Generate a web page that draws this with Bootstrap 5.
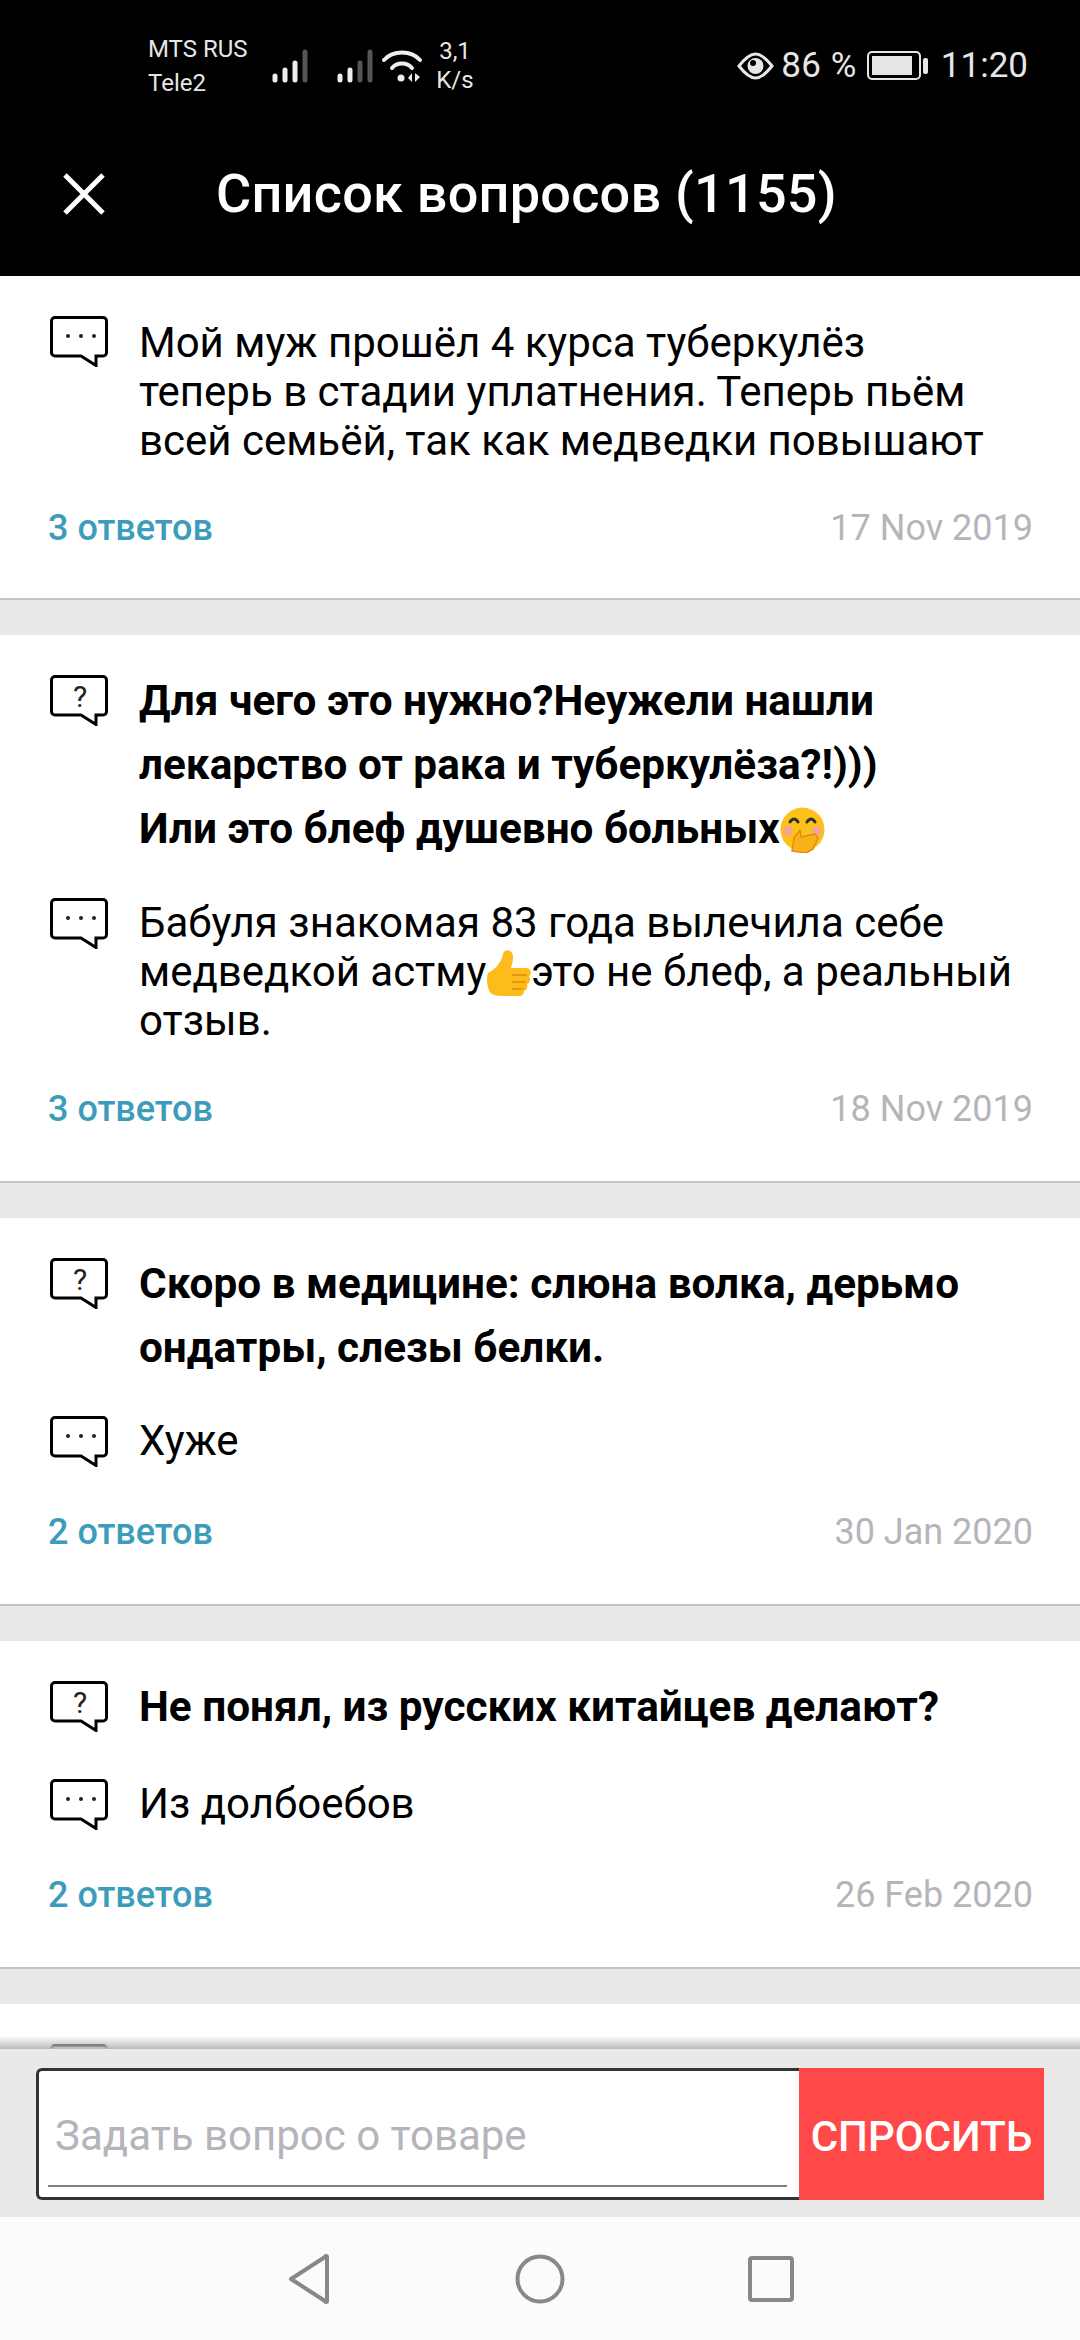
<!DOCTYPE html>
<html lang="en">
<head>
<meta charset="UTF-8">
<title>Список вопросов</title>
<link rel="stylesheet" href="https://cdn.jsdelivr.net/npm/bootstrap@5.3.0/dist/css/bootstrap.min.css">
<style>
html, body { margin: 0; height: 2340px; overflow: hidden; }
body { font-family: Roboto, "Liberation Sans", sans-serif; background: #e9e9e9; color: #000; width: 1080px; }
.phone { height: 2340px; }
.top-area { height: 276px; background: #000; color: #fff; flex: none; }
.status-row { height: 132px; padding-left: 148px; padding-right: 52px; color: #e6e6e6; }
.carrier { width: 124px; font-size: 24px; line-height: 34px; white-space: nowrap; }
.sig-one { margin-right: 29px; }
.sig-two { margin-right: 9px; }
.wifi-ico { margin-right: 14px; }
.speed { font-size: 24px; line-height: 29px; width: 38px; text-align: center; white-space: nowrap; }
.batt-text { font-size: 35px; line-height: 40px; }
.pct-text { margin: 0 10px 0 7px; letter-spacing: .5px; }
.time-text { margin-left: 13px; }
.title-row { height: 144px; padding-bottom: 20px; }
.close-icon { margin-left: 63px; margin-right: 111px; }
.title-text { font-size: 54px; font-weight: 500; line-height: 60px; white-space: nowrap; letter-spacing: .25px; }
.feed { flex: 1 1 auto; overflow: hidden; min-height: 0; }
.q-card { background: #fff; border-bottom: 2px solid #c4c4c4; margin-bottom: 35px; padding: 34px 47px 52px 48px; }
.q-card.q-first { padding-top: 42px; padding-bottom: 50px; }
.q-first .q-ico { margin-top: -2px; }
.q-line { gap: 31px; }
.q-line.q-answer { min-height: 53px; margin-bottom: 43px; }
.q-line.q-ask { margin-bottom: 36px; }
.q-tall .q-line.q-answer { margin-bottom: 44px; }
.q-tall .q-line.q-ask { margin-bottom: 37px; }
.q-ico { flex: none; width: 58px; height: 51px; margin-left: 2px; }
.q-ask .q-ico { margin-top: 6px; }
.q-body { font-size: 42px; line-height: 49px; white-space: nowrap; }
.q-head { font-size: 42.3px; font-weight: 700; line-height: 64px; min-height: 68px; white-space: nowrap; }
.answers { font-size: 36px; font-weight: 500; color: #3c9dbb; }
.q-date { font-size: 36px; color: #b5b5b9; }
.q-foot { line-height: 40px; }
.emoji-ico { width: 45px; height: 47px; vertical-align: -10px; }
.ask-bar { height: 168px; background: #e9e9e9; padding: 19px 36px 17px; position: relative; flex: none; }
.ask-bar::before { content: ""; position: absolute; left: 0; right: 0; top: -13px; height: 13px; background: linear-gradient(#ffffff00, #b9b9b9); }
.ask-box { height: 132px; }
.ask-field { background: #fff; border: 3px solid #333; border-right: 0; border-radius: 6px 0 0 6px; padding: 0 12px 10px 9px; }
.ask-input { border: 0; border-bottom: 2px solid #808080; border-radius: 0; outline: none; height: 100%; width: 100%; font-size: 42px; padding: 14px 7px 0; background: transparent; }
.ask-input::placeholder { color: #b4b4ba; opacity: 1; }
.ask-btn { width: 245px; background: #ff4848; color: #fff; font-size: 42px; font-weight: 500; border: 0; border-radius: 0; padding: 4px 0 0; flex: none; white-space: nowrap; }
.nav-bar { height: 123px; background: #fbfbfb; flex: none; }
.nav-slot { width: 231px; }
</style>
</head>
<body>
<div class="phone d-flex flex-column">

  <div class="top-area">
    <div class="status-row d-flex align-items-center">
      <div class="carrier">MTS RUS<br>Tele2</div>
      <svg class="sig-one" width="36" height="34" viewBox="0 0 36 34"><g fill="none" stroke-width="5" stroke-linecap="round"><path d="M3 27v4M13 21v10M23 14v17" stroke="#eee"/><path d="M33 3v28" stroke="#555"/></g></svg>
      <svg class="sig-two" width="36" height="34" viewBox="0 0 36 34"><g fill="none" stroke-width="5" stroke-linecap="round"><path d="M3 27v4M13 21v10" stroke="#eee"/><path d="M23 14v17M33 3v28" stroke="#555"/></g></svg>
      <svg class="wifi-ico" width="40" height="34" viewBox="0 0 40 34"><g fill="none" stroke="#eee" stroke-width="4" stroke-linecap="round"><path d="M2 11C11 1 29 1 38 11"/><path d="M10 19c5-6 15-6 20 0"/></g><circle cx="19" cy="29" r="3.500" fill="#eee"/><path d="M30 24v9l-4-4zM33 24v9l5-5z" fill="#eee"/></svg>
      <div class="speed">3,1<br>K/s</div>
      <div class="ms-auto d-flex align-items-center batt-text">
        <svg width="37" height="28" viewBox="0 0 37 28"><path d="M2 14C9 5 14 2 18.500 2S28 5 35 14c-7 9-12 12-16.500 12S9 23 2 14z" fill="none" stroke="#e6e6e6" stroke-width="3"/><circle cx="18.500" cy="14" r="8" fill="#e6e6e6"/><circle cx="16" cy="11" r="3" fill="#000"/></svg>
        <span class="pct-text">86 %</span>
        <svg width="61" height="30" viewBox="0 0 61 30"><rect x="1" y="1" width="52" height="27" rx="4" fill="none" stroke="#e6e6e6" stroke-width="2"/><rect x="5" y="5" width="40" height="19" fill="#e6e6e6"/><rect x="56" y="7" width="5" height="16" rx="2" fill="#e6e6e6"/></svg>
        <span class="time-text">11:20</span>
      </div>
    </div>
    <div class="title-row d-flex align-items-center">
      <svg class="close-icon" width="42" height="42" viewBox="0 0 42 42"><path d="M2 2l38 38M40 2L2 40" stroke="#fff" stroke-width="5" fill="none"/></svg>
      <div class="title-text">Список вопросов (1155)</div>
    </div>
  </div>

  <div class="feed">
    <div class="q-card q-first">
      <div class="d-flex q-line q-answer">
        <svg class="q-ico" viewBox="0 0 58 51"><use href="#bubble-dots"/></svg>
        <div class="q-body">Мой муж прошёл 4 курса туберкулёз<br>теперь в стадии уплатнения. Теперь пьём<br>всей семьёй, так как медведки повышают</div>
      </div>
      <div class="d-flex justify-content-between q-foot"><span class="answers">3 ответов</span><span class="q-date">17 Nov 2019</span></div>
    </div>

    <div class="q-card q-tall">
      <div class="d-flex q-line q-ask">
        <svg class="q-ico" viewBox="0 0 58 51"><use href="#bubble-ask"/></svg>
        <div class="q-head">Для чего это нужно?Неужели нашли<br>лекарство от рака и туберкулёза?!)))<br>Или это блеф душевно больных<svg class="emoji-ico" viewBox="0 0 45 47"><circle cx="22.500" cy="23.500" r="22" fill="#fcc21b"/><circle cx="8" cy="25" r="5" fill="#f6a58a"/><circle cx="37" cy="25" r="5" fill="#f6a58a"/><path d="M10 16q4-6 8 0M27 16q4-6 8 0" stroke="#2f2f2f" stroke-width="3" fill="none" stroke-linecap="round"/><path d="M12 45l2-13 6-8 1 7 14-3 3 4-5 11-7 4z" fill="#f7b21a" stroke="#e08e0b" stroke-width="1.500" stroke-linejoin="round"/></svg></div>
      </div>
      <div class="d-flex q-line q-answer">
        <svg class="q-ico" viewBox="0 0 58 51"><use href="#bubble-dots"/></svg>
        <div class="q-body">Бабуля знакомая 83 года вылечила себе<br>медведкой астму<svg class="emoji-ico" viewBox="0 0 45 47"><path d="M2 24c6-3 13-9 15-19 1-6 10-5 10 3 0 4-1 8-2 11h15c6 0 6 7 3 8 2 3 1 7-2 8 1 3 0 6-3 7 0 3-2 5-5 5H15c-4 0-6-1-9-2-5-2-6-17-4-21z" fill="#fdbb1c"/><path d="M26 26h15M26 33h14M26 40h11" stroke="#e8980f" stroke-width="2" fill="none"/></svg>это не блеф, а реальный<br>отзыв.</div>
      </div>
      <div class="d-flex justify-content-between q-foot"><span class="answers">3 ответов</span><span class="q-date">18 Nov 2019</span></div>
    </div>

    <div class="q-card">
      <div class="d-flex q-line q-ask">
        <svg class="q-ico" viewBox="0 0 58 51"><use href="#bubble-ask"/></svg>
        <div class="q-head">Скоро в медицине: слюна волка, дерьмо<br>ондатры, слезы белки.</div>
      </div>
      <div class="d-flex q-line q-answer">
        <svg class="q-ico" viewBox="0 0 58 51"><use href="#bubble-dots"/></svg>
        <div class="q-body">Хуже</div>
      </div>
      <div class="d-flex justify-content-between q-foot"><span class="answers">2 ответов</span><span class="q-date">30 Jan 2020</span></div>
    </div>

    <div class="q-card">
      <div class="d-flex q-line q-ask">
        <svg class="q-ico" viewBox="0 0 58 51"><use href="#bubble-ask"/></svg>
        <div class="q-head">Не понял, из русских китайцев делают?</div>
      </div>
      <div class="d-flex q-line q-answer">
        <svg class="q-ico" viewBox="0 0 58 51"><use href="#bubble-dots"/></svg>
        <div class="q-body">Из долбоебов</div>
      </div>
      <div class="d-flex justify-content-between q-foot"><span class="answers">2 ответов</span><span class="q-date">26 Feb 2020</span></div>
    </div>

    <div class="q-card">
      <div class="d-flex q-line q-ask">
        <svg class="q-ico" viewBox="0 0 58 51"><use href="#bubble-ask"/></svg>
      </div>
    </div>
  </div>

  <div class="ask-bar">
    <div class="ask-box d-flex">
      <div class="ask-field flex-grow-1"><input class="ask-input" type="text" placeholder="Задать вопрос о товаре"></div>
      <button class="btn ask-btn" type="button">СПРОСИТЬ</button>
    </div>
  </div>

  <div class="nav-bar d-flex justify-content-center align-items-center">
    <div class="nav-slot d-flex justify-content-center"><svg width="42" height="50" viewBox="0 0 42 50"><path d="M39 3a1 1 0 0 0-2 0L3 25l34 22a1 1 0 0 0 2 0z" fill="none" stroke="#888" stroke-width="4" stroke-linejoin="round"/></svg></div>
    <div class="nav-slot d-flex justify-content-center"><svg width="50" height="50" viewBox="0 0 50 50"><circle cx="25" cy="25" r="22.500" fill="none" stroke="#888" stroke-width="4"/></svg></div>
    <div class="nav-slot d-flex justify-content-center"><svg width="46" height="46" viewBox="0 0 46 46"><rect x="2" y="2" width="42" height="42" rx="2" fill="none" stroke="#888" stroke-width="4"/></svg></div>
  </div>
</div>

<svg width="0" height="0" class="d-block">
  <defs>
    <g id="bubble-base"><path d="M5 1.500h48a3.500 3.500 0 0 1 3.500 3.500v31.500a3.500 3.500 0 0 1-3.500 3.500h-7v9.500L31 40H5a3.500 3.500 0 0 1-3.500-3.500V5A3.500 3.500 0 0 1 5 1.500z" fill="#fff" stroke="#000" stroke-width="3"/></g>
    <g id="bubble-dots"><use href="#bubble-base"/><circle cx="18" cy="20" r="2" fill="#222"/><circle cx="31" cy="20" r="2" fill="#222"/><circle cx="44" cy="20" r="2" fill="#222"/></g>
    <g id="bubble-ask"><use href="#bubble-base"/><text x="30" y="32" text-anchor="middle" font-family="Roboto, sans-serif" font-size="30" fill="#222">?</text></g>
  </defs>
</svg>
<script src="https://cdn.jsdelivr.net/npm/bootstrap@5.3.0/dist/js/bootstrap.bundle.min.js"></script>
</body>
</html>
